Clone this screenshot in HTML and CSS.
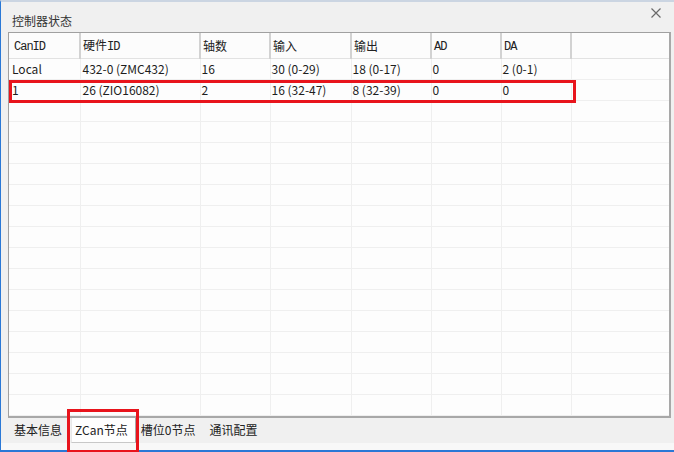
FILE: index.html
```html
<!DOCTYPE html>
<html lang="zh">
<head>
<meta charset="utf-8">
<link rel="stylesheet" href="styles.css">
</head>
<body>
<div class="window">
  <div class="titlebar">
    <span class="title">控制器状态</span>
    <svg class="close" width="10" height="10" viewBox="0 0 10 10"><path d="M0.5 0.5 L9.5 9.5 M9.5 0.5 L0.5 9.5" stroke="#6a6a6a" stroke-width="1.2" fill="none"/></svg>
  </div>
  <div class="grid">
    <table class="table">
      <colgroup>
        <col class="c1"><col class="c2"><col class="c3"><col class="c4"><col class="c5"><col class="c6"><col class="c7"><col class="c8">
      </colgroup>
      <thead>
        <tr><th class="first"><span class="mono">CanID</span></th><th>硬件<span class="mono">ID</span></th><th>轴数</th><th>输入</th><th>输出</th><th><span class="mono">AD</span></th><th><span class="mono">DA</span></th><th class="last"></th></tr>
      </thead>
      <tbody>
        <tr><td class="first">Local</td><td class="second">432-0 (ZMC432)</td><td>16</td><td>30 (0-29)</td><td>18 (0-17)</td><td>0</td><td>2 (0-1)</td><td></td></tr>
        <tr><td class="first">1</td><td class="second">26 (ZIO16082)</td><td>2</td><td>16 (32-47)</td><td>8 (32-39)</td><td>0</td><td>0</td><td></td></tr>
        <tr><td></td><td></td><td></td><td></td><td></td><td></td><td></td><td></td></tr>
        <tr><td></td><td></td><td></td><td></td><td></td><td></td><td></td><td></td></tr>
        <tr><td></td><td></td><td></td><td></td><td></td><td></td><td></td><td></td></tr>
        <tr><td></td><td></td><td></td><td></td><td></td><td></td><td></td><td></td></tr>
        <tr><td></td><td></td><td></td><td></td><td></td><td></td><td></td><td></td></tr>
        <tr><td></td><td></td><td></td><td></td><td></td><td></td><td></td><td></td></tr>
        <tr><td></td><td></td><td></td><td></td><td></td><td></td><td></td><td></td></tr>
        <tr><td></td><td></td><td></td><td></td><td></td><td></td><td></td><td></td></tr>
        <tr><td></td><td></td><td></td><td></td><td></td><td></td><td></td><td></td></tr>
        <tr><td></td><td></td><td></td><td></td><td></td><td></td><td></td><td></td></tr>
        <tr><td></td><td></td><td></td><td></td><td></td><td></td><td></td><td></td></tr>
        <tr><td></td><td></td><td></td><td></td><td></td><td></td><td></td><td></td></tr>
        <tr><td></td><td></td><td></td><td></td><td></td><td></td><td></td><td></td></tr>
        <tr><td></td><td></td><td></td><td></td><td></td><td></td><td></td><td></td></tr>
        <tr><td></td><td></td><td></td><td></td><td></td><td></td><td></td><td></td></tr>
      </tbody>
    </table>
    <div class="row-mark"></div>
  </div>
  <div class="tabs">
    <div class="tab">基本信息</div>
    <div class="tab active">ZCan节点</div>
    <div class="tab slot">槽位0节点</div>
    <div class="tab comm">通讯配置</div>
  </div>
  <div class="footer"></div>
  <div class="tab-mark"></div>
</div>
</body>
</html>
```
FILE: styles.css
```css
html, body {
  margin: 0;
  padding: 0;
}
body {
  width: 674px;
  height: 452px;
  overflow: hidden;
  background: #f0f0f0;
  font-family: "Noto Sans CJK SC", "Noto Sans", sans-serif;
  font-size: 12px;
  color: #1e1e1e;
}
.window {
  position: relative;
  box-sizing: border-box;
  width: 674px;
  height: 452px;
  border-top: 2px solid #cbd5e2;
  border-left: 1px solid #2a78d6;
  border-bottom: 2px solid #2a78d6;
  display: flex;
  flex-direction: column;
}
.titlebar {
  height: 30px;
  display: flex;
  align-items: center;
  justify-content: space-between;
  padding: 0 13px 0 11px;
  box-sizing: border-box;
}
.title {
  font-size: 12px;
  color: #333;
  margin-top: 6px;
}
.close {
  align-self: flex-start;
  margin-top: 6px;
}
.grid {
  position: relative;
  margin-left: 7px;
  width: 663px;
  height: 386px;
  box-sizing: border-box;
  border-top: 1px solid #a0a0a0;
  border-left: 1px solid #a0a0a0;
  border-right: 2px solid #a8a8a8;
  border-bottom: 2px solid #a8a8a8;
  background: #fdfdfd;
  overflow: hidden;
}
.table {
  border-collapse: collapse;
  table-layout: fixed;
  width: 660px;
}
.c1 { width: 71px; }
.c2 { width: 120px; }
.c3 { width: 70px; }
.c4 { width: 81px; }
.c5 { width: 80px; }
.c6 { width: 70px; }
.c7 { width: 70px; }
.c8 { width: 98px; }
th {
  height: 25px;
  box-sizing: border-box;
  padding: 0 0 0 2px;
  text-align: left;
  font-weight: normal;
  color: #222;
  background: #fcfcfc;
  border-right: 2px solid #d2d2d2;
  border-bottom: 1px solid #e2e2e2;
  white-space: nowrap;
}
th.first { padding-left: 5px; }
th.last { border-right: none; }
.mono {
  font-family: "Liberation Mono", "DejaVu Sans Mono", monospace;
  font-size: 12px;
  letter-spacing: -1px;
}
td {
  height: 21px;
  box-sizing: border-box;
  padding: 0 0 0 1px;
  border-right: 1px solid #efefef;
  border-bottom: 1px solid #efefef;
  white-space: nowrap;
  color: #1e1e1e;
}
td.first { padding-left: 3px; }
td.second { padding-left: 2px; }
td:last-child { border-right: none; }
.row-mark {
  position: absolute;
  left: 0;
  top: 47px;
  width: 567px;
  height: 23px;
  box-sizing: border-box;
  border: 3px solid #e8141c;
}
.tabs {
  display: flex;
  height: 25px;
  padding-left: 8px;
}
.tab {
  padding: 0 5px;
  line-height: 24px;
  color: #222;
  box-sizing: border-box;
}
.tab.active {
  margin-left: 4px;
  background: #fefefe;
  border-right: 1px solid #a8a8a8;
  border-bottom: 1px solid #c8c8c8;
  border-left: 1px solid #e8e8e8;
  padding: 0 7px 0 3px;
}
.tab.comm { margin-left: 4px; }
.footer {
  flex: 1;
  background: #f8f8f8;
}
.tab-mark {
  position: absolute;
  left: 66px;
  top: 407px;
  width: 72px;
  height: 44px;
  box-sizing: border-box;
  border: 3px solid #e8141c;
}
```
